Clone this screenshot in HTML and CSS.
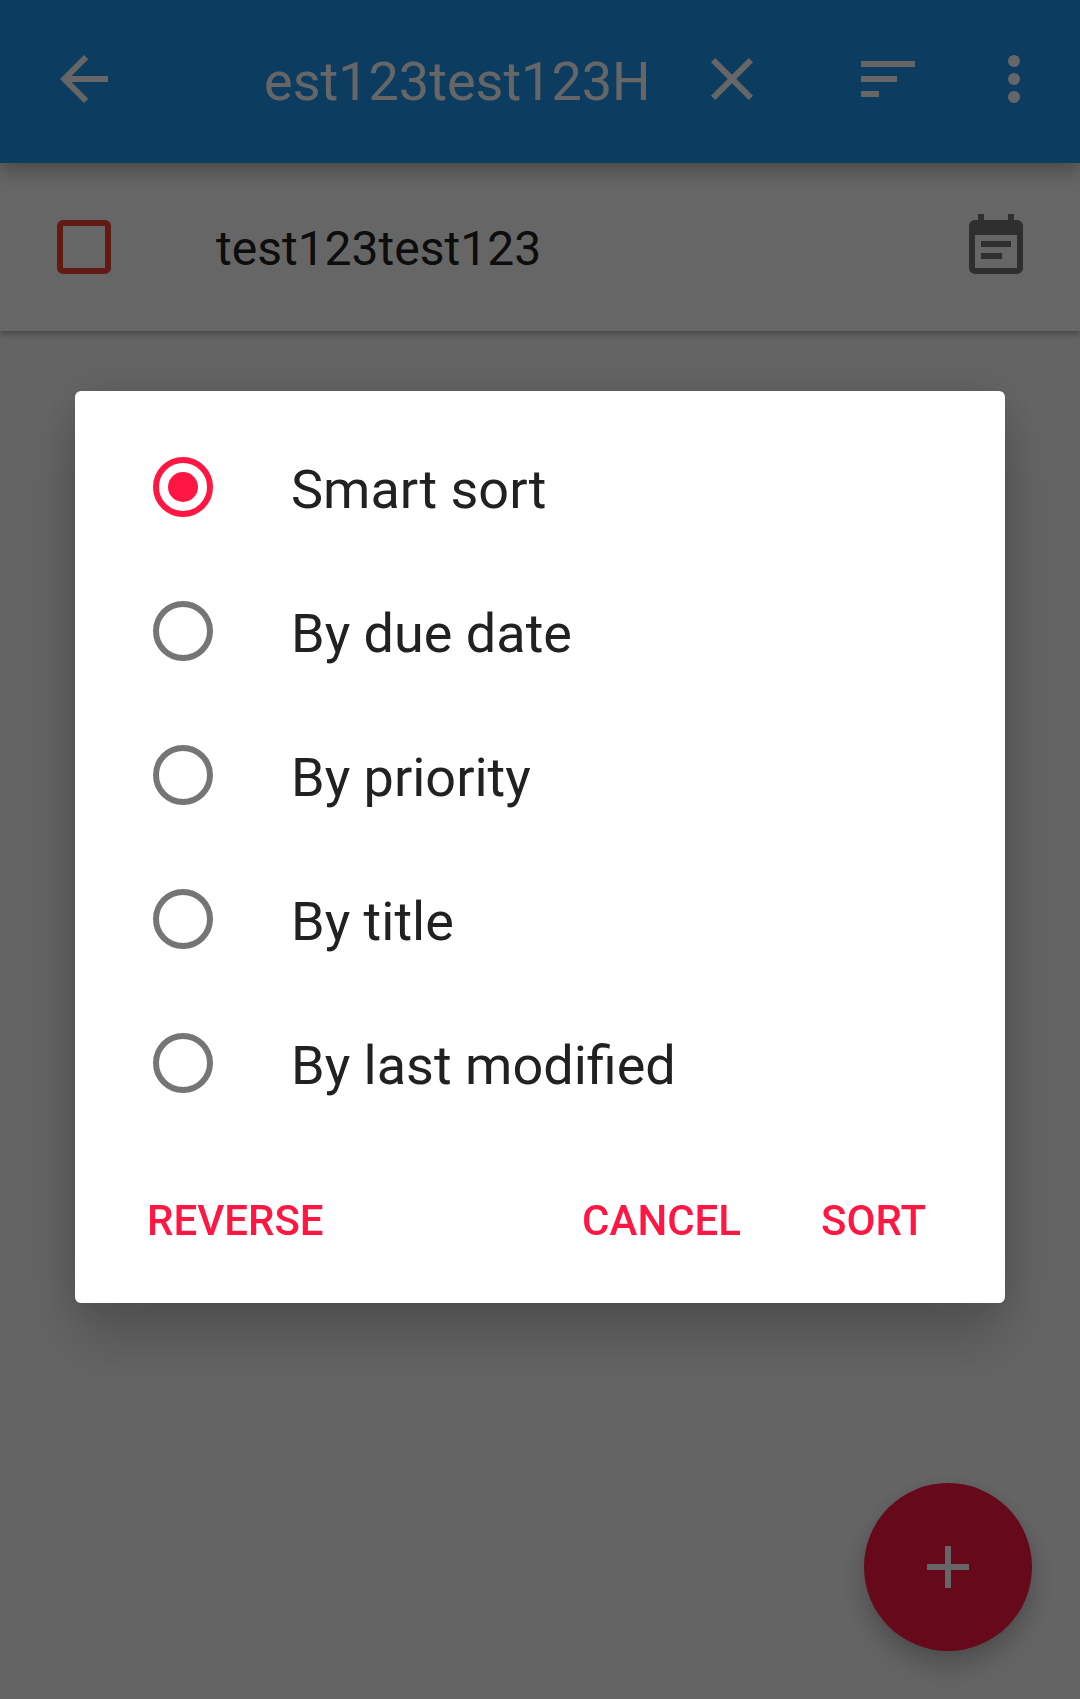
FILE: index.html
```html
<!DOCTYPE html>
<html lang="en">
<head>
<meta charset="utf-8">
<title>Tasks</title>
<link rel="stylesheet" href="styles.css">
</head>
<body>
<div class="screen">
  <header class="toolbar">
    <svg class="icon" viewBox="0 0 24 24"><path d="M20 11H7.83l5.59-5.59L12 4l-8 8 8 8 1.41-1.41L7.83 13H20z"/></svg>
    <div class="search">est123test123H</div>
    <svg class="icon clear" viewBox="0 0 24 24"><path d="M19 6.41 17.59 5 12 10.59 6.41 5 5 6.41 10.59 12 5 17.59 6.41 19 12 13.41 17.59 19 19 17.59 13.41 12z"/></svg>
    <svg class="icon sort" viewBox="0 0 24 24"><path d="M3 18h6v-2H3zM3 6v2h18V6zm0 7h12v-2H3z"/></svg>
    <svg class="icon more" viewBox="0 0 24 24"><path d="M12 8a2 2 0 1 0 0-4 2 2 0 0 0 0 4zm0 2a2 2 0 1 0 0 4 2 2 0 0 0 0-4zm0 6a2 2 0 1 0 0 4 2 2 0 0 0 0-4z"/></svg>
  </header>
  <main class="task">
    <svg class="icon check" viewBox="0 0 24 24"><path d="M19 5v14H5V5zm0-2H5a2 2 0 0 0-2 2v14a2 2 0 0 0 2 2h14a2 2 0 0 0 2-2V5a2 2 0 0 0-2-2z"/></svg>
    <span class="task-title">test123test123</span>
    <svg class="icon note" viewBox="0 0 24 24"><path d="M17 10H7v2h10zm2-7h-1V1h-2v2H8V1H6v2H5a2 2 0 0 0-2 2v14a2 2 0 0 0 2 2h14a2 2 0 0 0 2-2V5a2 2 0 0 0-2-2zm0 16H5V8h14zm-5-5H7v2h7z"/></svg>
  </main>
  <div class="fab"><svg class="icon" viewBox="0 0 24 24"><path d="M19 13h-6v6h-2v-6H5v-2h6V5h2v6h6z"/></svg></div>
</div>
<div class="scrim">
  <section class="dialog">
    <ul class="options">
      <li class="option"><span class="radio selected"></span><span class="label">Smart sort</span></li>
      <li class="option"><span class="radio"></span><span class="label">By due date</span></li>
      <li class="option"><span class="radio"></span><span class="label">By priority</span></li>
      <li class="option"><span class="radio"></span><span class="label">By title</span></li>
      <li class="option"><span class="radio"></span><span class="label">By last modified</span></li>
    </ul>
    <div class="actions">
      <span class="action">REVERSE</span>
      <span class="action cancel">CANCEL</span>
      <span class="action">SORT</span>
    </div>
  </section>
</div>
</body>
</html>
```
FILE: styles.css
```css
* { box-sizing: border-box; }
body {
  margin: 0;
  font-family: Roboto, sans-serif;
  color: #212121;
}
.screen {
  position: relative;
  height: 1699px;
  background: #fafafa;
  overflow: hidden;
}
.icon {
  display: block;
  flex: none;
  width: 72px;
  height: 72px;
  fill: currentColor;
}
.toolbar {
  position: relative;
  z-index: 1;
  display: flex;
  align-items: flex-start;
  height: 163px;
  padding: 43px 30px 0 48px;
  background: #2196f3;
  color: #fff;
  box-shadow: 0 12px 15px rgba(0, 0, 0, .2), 0 0 9px rgba(0, 0, 0, .1);
}
.search {
  flex: none;
  width: 384px;
  margin-left: 144px;
  font-size: 54px;
  line-height: 78px;
  white-space: nowrap;
}
.clear { margin-left: 48px; }
.sort { margin-left: 84px; }
.more { margin-left: 54px; }
.task {
  display: flex;
  align-items: center;
  height: 168px;
  padding: 0 48px;
  background: #fff;
  color: #212121;
  box-shadow: 0 3px 6px rgba(0, 0, 0, .3);
}
.check { color: #f44336; }
.task-title {
  flex: 1;
  margin-left: 96px;
  padding-top: 4px;
  font-size: 48px;
  line-height: 56px;
}
.note { color: #757575; }
.fab {
  position: absolute;
  right: 48px;
  bottom: 48px;
  display: grid;
  place-items: center;
  width: 168px;
  height: 168px;
  border-radius: 50%;
  background: #ff1744;
  color: #fff;
  box-shadow: 0 15px 27px rgba(0, 0, 0, .22), 0 0 12px rgba(0, 0, 0, .06);
}
.scrim {
  position: fixed;
  inset: 0;
  z-index: 2;
  display: flex;
  justify-content: center;
  align-items: flex-start;
  padding-top: 391px;
  background: rgba(0, 0, 0, .6);
}
.dialog {
  width: 930px;
  height: 912px;
  padding: 24px 72px 0;
  border-radius: 6px;
  background: #fff;
  box-shadow: 0 36px 60px rgba(0, 0, 0, .2), 0 0 42px rgba(0, 0, 0, .12);
}
.options {
  margin: 0;
  padding: 0;
  list-style: none;
}
.option {
  display: flex;
  align-items: center;
  gap: 78px;
  height: 144px;
  padding-left: 6px;
  font-size: 54px;
}
.label { padding-top: 4px; }
.radio {
  display: grid;
  place-items: center;
  width: 60px;
  height: 60px;
  border: 6px solid #757575;
  border-radius: 50%;
}
.selected { border-color: #ff1744; }
.selected::after {
  content: "";
  width: 30px;
  height: 30px;
  border-radius: 50%;
  background: #ff1744;
}
.actions {
  display: flex;
  margin-top: 61px;
  color: #ff1744;
  font-size: 42px;
  font-weight: 500;
  line-height: 50px;
}
.cancel {
  margin-left: auto;
  margin-right: 80px;
}
.action:last-child { margin-right: 7px; }
```
